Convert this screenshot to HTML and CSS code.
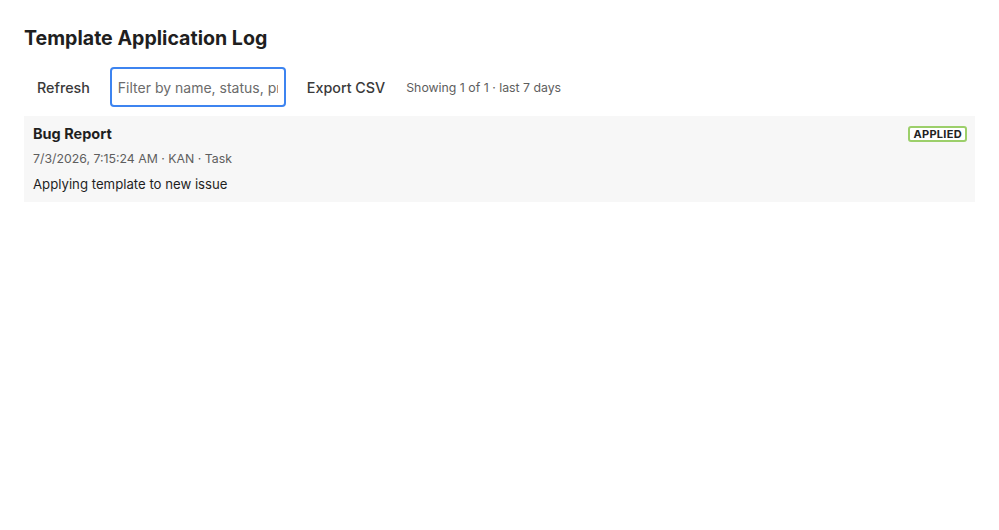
FILE: index.html
```html
<!DOCTYPE html>
<html lang="en">
<head>
  <meta charset="UTF-8">
  <meta name="viewport" content="width=device-width, initial-scale=1.0">
  <title>Template Application Log</title>
  <link rel="stylesheet" href="styles.css">
</head>
<body>
  <div class="page">
    <h1 class="title">Template Application Log</h1>

    <div class="toolbar">
      <button class="btn">Refresh</button>
      <input class="filter" type="text" placeholder="Filter by name, status, project…">
      <button class="btn">Export CSV</button>
      <span class="count">Showing 1 of 1 · last 7 days</span>
    </div>

    <ul class="log">
      <li class="entry">
        <div class="entry-head">
          <span class="entry-name">Bug Report</span>
          <span class="badge">APPLIED</span>
        </div>
        <div class="entry-meta">7/3/2026, 7:15:24 AM · KAN · Task</div>
        <div class="entry-text">Applying template to new issue</div>
      </li>
    </ul>
  </div>
</body>
</html>
```

FILE: styles.css
```css
/* template log page */
body {
  margin: 0;
  font-family: Inter, "Noto Sans", sans-serif;
  color: #172b4d;
  background: #fff;
}

.page {
  padding: 24px 24px;
}

.title {
  margin: 0 0 15px;
  font-size: 19.6px;
  font-weight: 700;
  color: #1f1f1f;
  line-height: 28px;
}

.toolbar {
  display: flex;
  align-items: center;
  gap: 8px;
  margin-bottom: 9px;
}

.btn {
  background: none;
  border: none;
  padding: 8px 12px 8px 13px;
  font-family: inherit;
  font-size: 14.3px;
  font-weight: 500;
  color: #3a3a3a;
  cursor: pointer;
}

.filter {
  width: 176px;
  height: 40px;
  box-sizing: border-box;
  padding: 0 6px;
  border: 2px solid #3d84f0;
  border-radius: 4px;
  font-family: inherit;
  font-size: 14px;
  color: #333;
  outline: none;
}

.filter::placeholder {
  color: #6b6b6b;
}

.count {
  margin-left: 1px;
  font-size: 12.3px;
  color: #5e5e5e;
}

.log {
  list-style: none;
  margin: 0;
  padding: 0;
}

.entry {
  background: #f7f7f7;
  padding: 8px 8px 8px 9px;
}

.entry-head {
  display: flex;
  justify-content: space-between;
  align-items: center;
  height: 20px;
}

.entry-name {
  font-size: 14.5px;
  font-weight: 700;
  line-height: 20px;
  color: #1f1f1f;
}

.badge {
  border: 2px solid #9ccf6a;
  border-radius: 3px;
  padding: 0 3px;
  font-size: 11px;
  font-weight: 700;
  letter-spacing: 0.3px;
  color: #222;
  background: #fff;
  line-height: 12px;
}

.entry-meta {
  margin-top: 5px;
  font-size: 12.3px;
  line-height: 20px;
  color: #5e5e5e;
}

.entry-text {
  margin-top: 5px;
  font-size: 13.2px;
  line-height: 20px;
  color: #1f1f1f;
}
```
